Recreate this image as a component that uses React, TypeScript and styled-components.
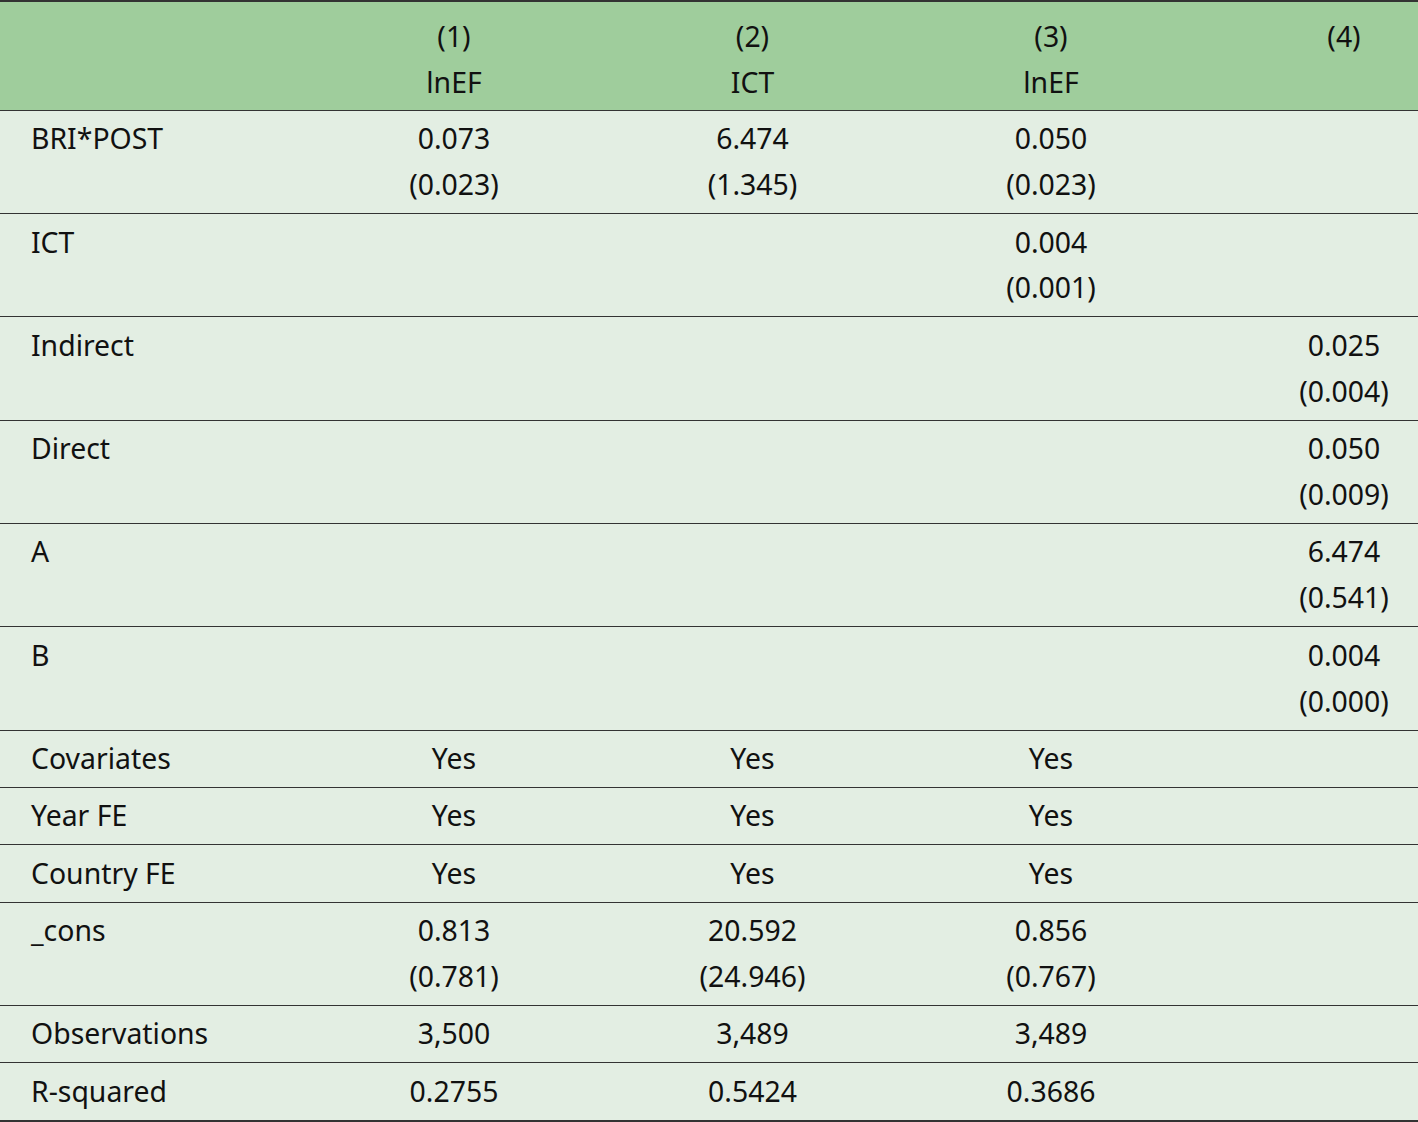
import React from "react";
import styled, { createGlobalStyle } from "styled-components";

const Global = createGlobalStyle`
  html, body { margin: 0; padding: 0; background: #ffffff; }
  body { font-family: "Noto Sans", "Open Sans", sans-serif; color: #111; }
`;

const Table = styled.div`
  width: 1418px;
  border-top: 2px solid #333;
  border-bottom: 2px solid #333;
  background: #e3eee3;
`;

const Row = styled.div<{ $head?: boolean }>`
  display: grid;
  grid-template-columns: 305px 298px 299px 298px 1fr;
  background: ${(p) => (p.$head ? "#9fcd9c" : "#e3eee3")};
  border-bottom: 1px solid #333;
  padding: ${(p) => (p.$head ? "12px 0 4px" : "5.4px 0 5.1px")};
  &:last-child { border-bottom: none; }
`;

const Label = styled.div`
  padding-left: 31px;
  font-size: 28.4px;
  line-height: 45.9px;
`;

const Cell = styled.div<{ $last?: boolean }>`
  text-align: center;
  font-size: 28.4px;
  line-height: 45.9px;
  padding-left: ${(p) => (p.$last ? "70px" : "0")};
  display: flex;
  flex-direction: column;
`;

type R = { label: string; cells: string[][] };

const rows: R[] = [
  { label: "BRI*POST", cells: [["0.073", "(0.023)"], ["6.474", "(1.345)"], ["0.050", "(0.023)"], []] },
  { label: "ICT", cells: [[], [], ["0.004", "(0.001)"], []] },
  { label: "Indirect", cells: [[], [], [], ["0.025", "(0.004)"]] },
  { label: "Direct", cells: [[], [], [], ["0.050", "(0.009)"]] },
  { label: "A", cells: [[], [], [], ["6.474", "(0.541)"]] },
  { label: "B", cells: [[], [], [], ["0.004", "(0.000)"]] },
  { label: "Covariates", cells: [["Yes"], ["Yes"], ["Yes"], []] },
  { label: "Year FE", cells: [["Yes"], ["Yes"], ["Yes"], []] },
  { label: "Country FE", cells: [["Yes"], ["Yes"], ["Yes"], []] },
  { label: "_cons", cells: [["0.813", "(0.781)"], ["20.592", "(24.946)"], ["0.856", "(0.767)"], []] },
  { label: "Observations", cells: [["3,500"], ["3,489"], ["3,489"], []] },
  { label: "R-squared", cells: [["0.2755"], ["0.5424"], ["0.3686"], []] },
];

export default function App() {
  return (
    <>
      <Global />
      <Table>
        <Row $head>
          <Label>&nbsp;</Label>
          <Cell><span>(1)</span><span>lnEF</span></Cell>
          <Cell><span>(2)</span><span>ICT</span></Cell>
          <Cell><span>(3)</span><span>lnEF</span></Cell>
          <Cell $last><span>(4)</span><span>&nbsp;</span></Cell>
        </Row>
        {rows.map((r) => (
          <Row key={r.label}>
            <Label>{r.label}</Label>
            {r.cells.map((c, i) => (
              <Cell key={i} $last={i === 3}>
                {c.map((t, j) => (
                  <span key={j}>{t}</span>
                ))}
              </Cell>
            ))}
          </Row>
        ))}
      </Table>
    </>
  );
}
